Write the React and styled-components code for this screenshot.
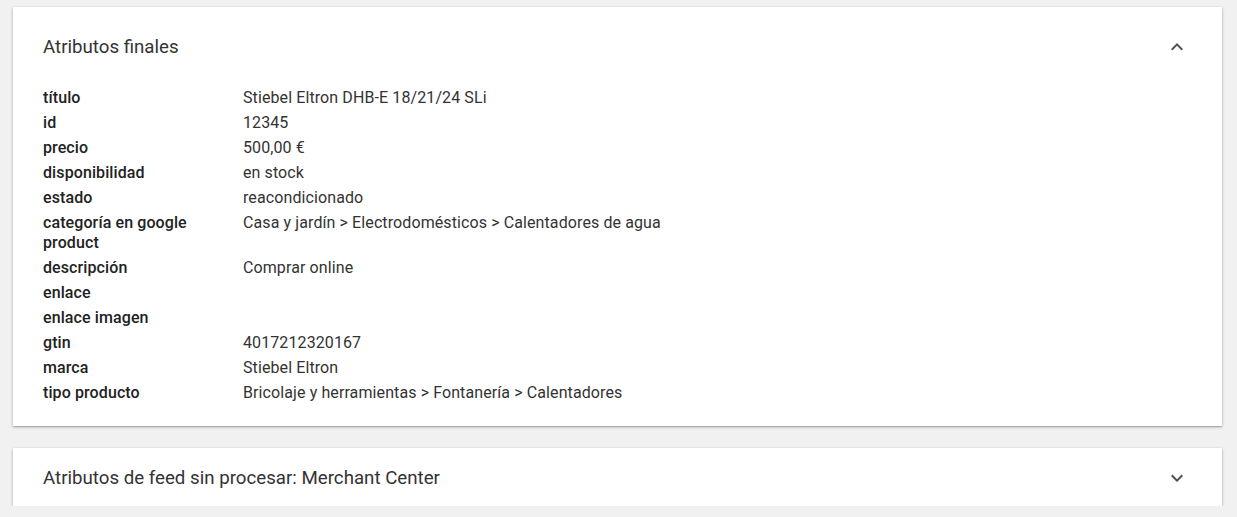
import React from 'react';
import styled, { createGlobalStyle } from 'styled-components';

const GlobalStyle = createGlobalStyle`
  html, body {
    margin: 0;
    background: #f1f1f1;
    font-family: Roboto, "Noto Sans", Arial, sans-serif;
  }
`;

const attrs = [
  ['título', 'Stiebel Eltron DHB-E 18/21/24 SLi'],
  ['id', '12345'],
  ['precio', '500,00 €'],
  ['disponibilidad', 'en stock'],
  ['estado', 'reacondicionado'],
  ['categoría en google product', 'Casa y jardín > Electrodomésticos > Calentadores de agua'],
  ['descripción', 'Comprar online'],
  ['enlace', ''],
  ['enlace imagen', ''],
  ['gtin', '4017212320167'],
  ['marca', 'Stiebel Eltron'],
  ['tipo producto', 'Bricolaje y herramientas > Fontanería > Calentadores'],
];

const Chevron = ({ up }) => (
  <svg width="24" height="24" viewBox="0 0 24 24" fill="#505050">
    {up
      ? <path d="M7.41 15.41 12 10.83l4.59 4.58L18 14l-6-6-6 6z" />
      : <path d="M7.41 8.59 12 13.17l4.59-4.58L18 10l-6 6-6-6z" />}
  </svg>
);

export default function App() {
  return (
    <Page>
      <GlobalStyle />
      <Card>
        <Header height={78}>
          <Title>Atributos finales</Title>
          <Chevron up />
        </Header>
        <Table>
          {attrs.map(([k, v]) => (
            <Row key={k}>
              <Label>{k}</Label>
              <Value>{v}</Value>
            </Row>
          ))}
        </Table>
      </Card>
      <Card>
        <Header height={58}>
          <Title>Atributos de feed sin procesar: Merchant Center</Title>
          <Chevron />
        </Header>
      </Card>
    </Page>
  );
}

const Page = styled.div`
  padding: 7px 15px 0 13px;
  display: flex;
  flex-direction: column;
  gap: 22px;
`;

const Card = styled.section`
  background: #fff;
  box-shadow: 0 1px 3px rgba(0, 0, 0, 0.28), 0 1px 1px rgba(0, 0, 0, 0.12);
`;

const Header = styled.div`
  box-sizing: border-box;
  height: ${p => p.height}px;
  padding: 2px 33px 0 30px;
  display: flex;
  align-items: center;
  justify-content: space-between;
`;

const Title = styled.h2`
  margin: 0;
  font-size: 18.7px;
  font-weight: 400;
  color: #333;
`;

const Table = styled.div`
  padding: 0 30px 21px;
`;

const Row = styled.div`
  display: grid;
  grid-template-columns: 200px 1fr;
  font-size: 16px;
  line-height: 20px;
  letter-spacing: 0.1px;
  padding: 2.5px 0;
`;

const Label = styled.div`
  font-weight: 500;
  color: #222;
  padding-right: 12px;
`;

const Value = styled.div`
  color: #333;
`;
